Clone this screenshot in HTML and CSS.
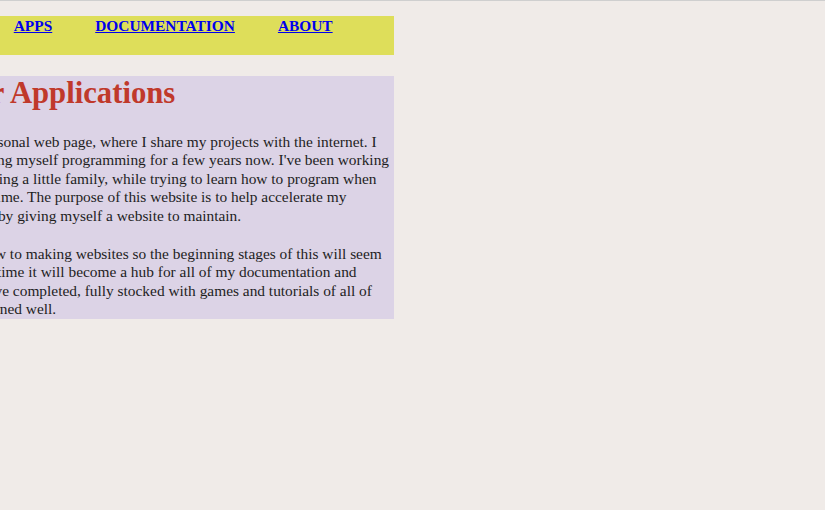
FILE: index.html
```html
<!DOCTYPE html>
<html lang="en">
<head>
<meta charset="utf-8">
<title>Hunter Applications</title>
<link rel="stylesheet" href="styles.css">
</head>
<body>
<div class="page">
  <nav class="nav">
    <a href="#">HOME</a>
    <a href="#">APPS</a>
    <a href="#">DOCUMENTATION</a>
    <a href="#">ABOUT</a>
  </nav>
  <main class="content">
    <h1>Hunter Applications</h1>
    <p>This is my personal web page, where I share my projects with the internet. I<br>
    have been losing myself programming for a few years now. I've been working<br>
    a job, plus raising a little family, while trying to learn how to program when<br>
    I have ample time. The purpose of this website is to help accelerate my<br>
    coding ability by giving myself a website to maintain.</p>
    <p>I am pretty new to making websites so the beginning stages of this will seem<br>
    simple, but in time it will become a hub for all of my documentation and<br>
    programs I have completed, fully stocked with games and tutorials of all of<br>
    which I've learned well.</p>
  </main>
</div>
</body>
</html>
```
FILE: styles.css
```css
html, body {
  margin: 0;
  padding: 0;
}
body {
  background: #f0ebe8;
  border-top: 1px solid #cfcfcf;
  font-family: "Liberation Serif", "Times New Roman", serif;
  font-size: 15.4px;
  line-height: 18.4px;
  color: #1e1e1e;
  overflow: hidden;
}
.page {
  margin-left: -120px;
  width: 514px;
  padding-top: 15px;
}
.nav {
  background: #dede5a;
  height: 38px;
  padding: 1px 0 0 42px;
  display: flex;
  gap: 43px;
  align-items: flex-start;
}
.nav a {
  color: #0000ee;
  font-weight: bold;
  text-decoration: underline;
}
.content {
  margin-top: 21px;
  background: #dcd3e6;
  padding: 0 0 0 29px;
}
.content h1 {
  margin: 0 0 22px;
  font-size: 30.7px;
  line-height: normal;
  font-weight: bold;
  color: #c0392b;
}
.content p {
  margin: 0 0 20px;
  white-space: nowrap;
}
.content p:last-child {
  margin-bottom: 0;
}
```
